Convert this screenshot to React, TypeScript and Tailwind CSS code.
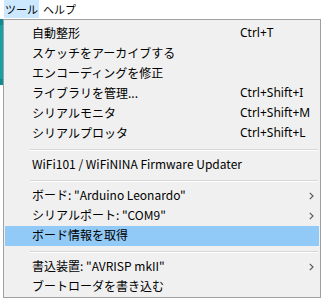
const jp = "font-['Noto_Sans_CJK_JP',sans-serif]";

type Item =
  | { kind: "item"; label: string; shortcut?: string; sub?: boolean; active?: boolean }
  | { kind: "sep" };

const items: Item[] = [
  { kind: "item", label: "自動整形", shortcut: "Ctrl+T" },
  { kind: "item", label: "スケッチをアーカイブする" },
  { kind: "item", label: "エンコーディングを修正" },
  { kind: "item", label: "ライブラリを管理...", shortcut: "Ctrl+Shift+I" },
  { kind: "item", label: "シリアルモニタ", shortcut: "Ctrl+Shift+M" },
  { kind: "item", label: "シリアルプロッタ", shortcut: "Ctrl+Shift+L" },
  { kind: "sep" },
  { kind: "item", label: "WiFi101 / WiFiNINA Firmware Updater" },
  { kind: "sep" },
  { kind: "item", label: 'ボード: "Arduino Leonardo"', sub: true },
  { kind: "item", label: 'シリアルポート: "COM9"', sub: true },
  { kind: "item", label: "ボード情報を取得", active: true },
  { kind: "sep" },
  { kind: "item", label: '書込装置: "AVRISP mkII"', sub: true },
  { kind: "item", label: "ブートローダを書き込む" },
];

function Chevron() {
  return (
    <svg width="5" height="8" viewBox="0 0 5 8" className="ml-auto mr-[5px] shrink-0">
      <path d="M0.8 0.8 L4 4 L0.8 7.2" fill="none" stroke="#5a5a5a" strokeWidth="1.2" />
    </svg>
  );
}

function MenuRow({ item }: { item: Item }) {
  if (item.kind === "sep") {
    return (
      <div className="h-[11px] flex items-center pl-[26px] pr-[2px]">
        <div className="w-full border-t border-[#d7d7d7] border-b border-b-white" />
      </div>
    );
  }
  return (
    <div
      className={`h-[20px] mx-px pl-[27px] flex items-center text-[12px] text-black whitespace-nowrap ${
        item.active ? "bg-[#91c9f7]" : ""
      }`}
    >
      <span className={`w-[208px] shrink-0 leading-[20px] -mt-[2px] ${jp}`}>{item.label}</span>
      {item.shortcut && (
        <span className="leading-[20px] -mt-[2px] font-['Noto_Sans',sans-serif]">{item.shortcut}</span>
      )}
      {item.sub && <Chevron />}
    </div>
  );
}

export default function App() {
  return (
    <div className={`relative w-[321px] h-[302px] overflow-hidden bg-white ${jp}`}>
      <div className="h-[19px] flex items-start gap-[3px] pl-[4px] bg-white text-[11px] text-black whitespace-nowrap">
        <div className="h-[18px] px-[1px] bg-[#cce8ff] flex items-center leading-none">ツール</div>
        <div className="h-[18px] px-[1px] flex items-center leading-none">ヘルプ</div>
      </div>
      <div className="h-[66px] bg-[#17a1a5] border-y-[6px] border-[#0f8c90]" />
      <div className="h-[213px]" />
      <div className="pl-[8px] text-[17px] leading-[24px] text-black whitespace-nowrap">その理由として考えます</div>

      <div className="absolute left-[3px] top-[19px] w-[318px] h-[279px] bg-[#f0f0f0] border border-[#a0a0a0] pt-[4px]">
        {items.map((item, i) => (
          <MenuRow key={i} item={item} />
        ))}
      </div>
    </div>
  );
}
